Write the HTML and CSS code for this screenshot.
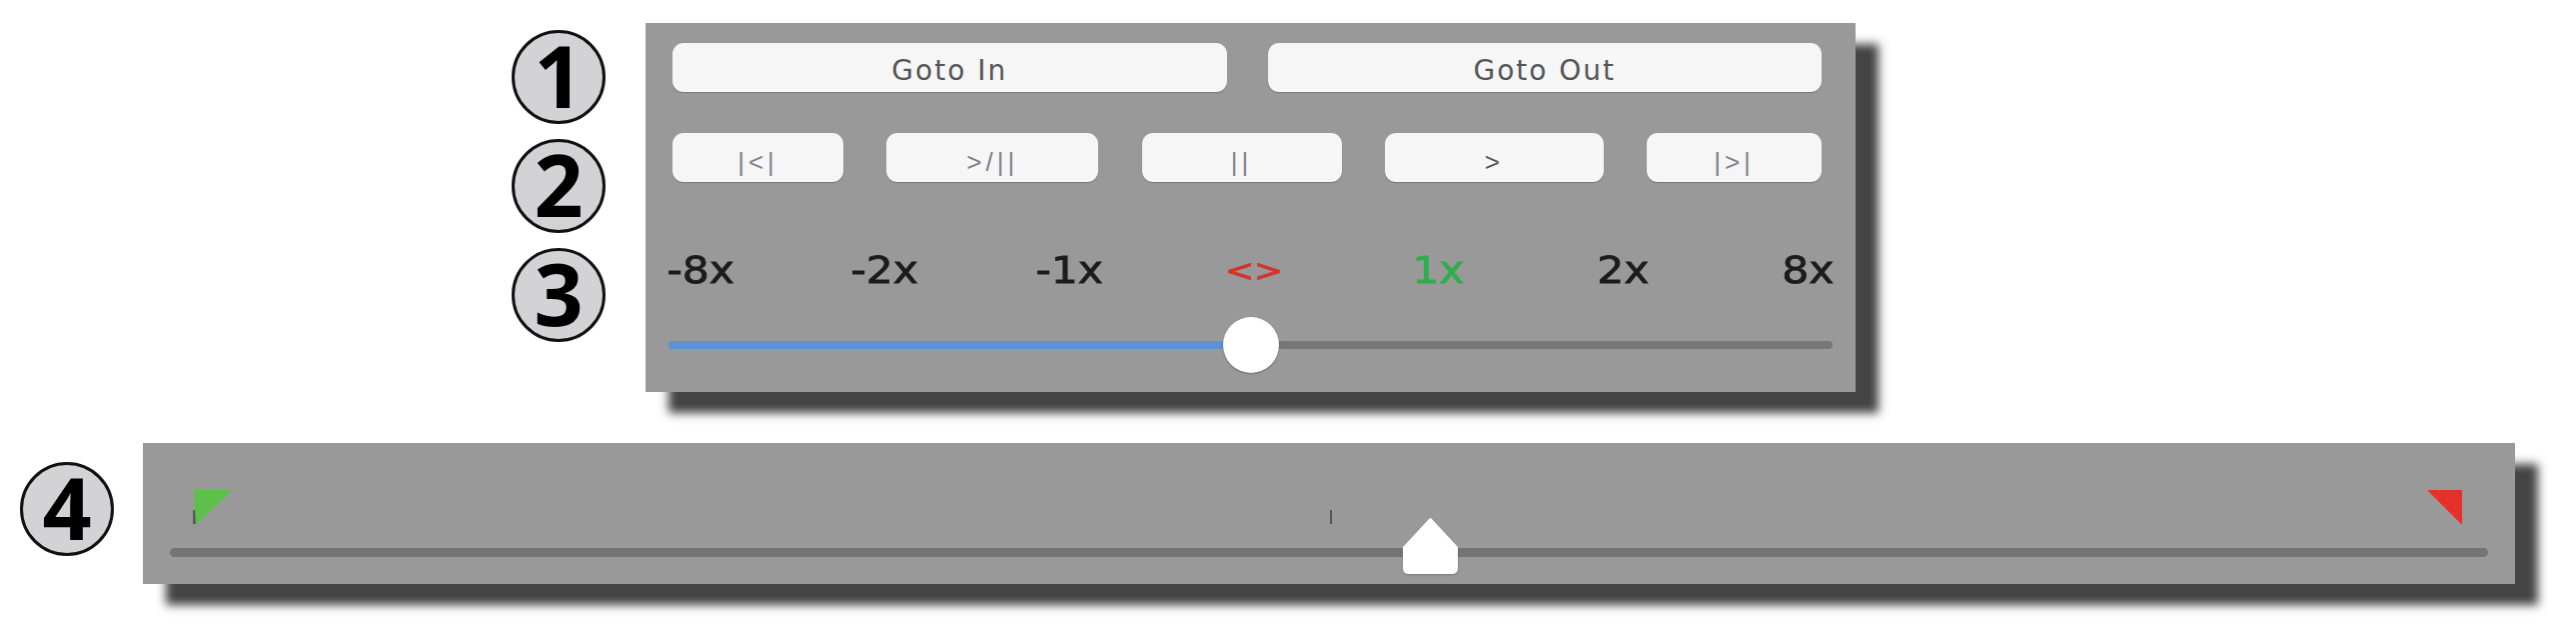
FILE: index.html
```html
<!DOCTYPE html>
<html>
<head>
<meta charset="utf-8">
<link rel="stylesheet" href="styles.css">
</head>
<body>
<div class="page">
  <section class="top">
    <div class="badges">
      <div class="badge">1</div>
      <div class="badge">2</div>
      <div class="badge">3</div>
    </div>
    <div class="panel transport">
      <div class="row goto">
        <div class="btn btn-lg">Goto In</div>
        <div class="btn btn-lg">Goto Out</div>
      </div>
      <div class="row controls">
        <div class="btn btn-sm w-start">|&lt;|</div>
        <div class="btn btn-sm w-playpause">&gt;/||</div>
        <div class="btn btn-sm w-pause">||</div>
        <div class="btn btn-sm w-play">&gt;</div>
        <div class="btn btn-sm w-end">|&gt;|</div>
      </div>
      <div class="speeds">
        <span class="speed"><span class="glyphs">-8x</span></span>
        <span class="speed"><span class="glyphs">-2x</span></span>
        <span class="speed"><span class="glyphs">-1x</span></span>
        <span class="speed stop"><span class="glyphs">&lt;&gt;</span></span>
        <span class="speed normal"><span class="glyphs">1x</span></span>
        <span class="speed"><span class="glyphs">2x</span></span>
        <span class="speed"><span class="glyphs">8x</span></span>
      </div>
      <div class="slider">
        <div class="slider-track">
          <div class="slider-fill" style="width:50%"></div>
        </div>
        <div class="slider-knob" style="left:50%"></div>
      </div>
    </div>
  </section>

  <section class="bottom">
    <div class="badge badge-4">4</div>
    <div class="panel timeline-panel">
      <div class="timeline">
        <div class="timeline-track"></div>
        <div class="stub in-stub"></div>
        <svg class="marker in-marker" viewBox="0 0 39 35" width="39" height="35"><path d="M0 0 L39 0 L2 35 Z" fill="#5cc04a"/></svg>
        <svg class="marker out-marker" viewBox="0 0 35 35" width="35" height="35"><path d="M0 0 L35 0 L35 35 Z" fill="#e8302a"/></svg>
        <div class="tick"></div>
        <svg class="playhead" viewBox="0 0 55 56" width="55" height="56"><path d="M26 1 Q27.5 -1 29 1 L55 29 L55 50 Q55 56 49 56 L6 56 Q0 56 0 50 L0 29 Z" fill="#ffffff"/></svg>
      </div>
    </div>
  </section>
</div>
</body>
</html>
```

FILE: styles.css
```css
* { box-sizing: border-box; }

html, body {
  margin: 0;
  padding: 0;
  background: #ffffff;
  width: 2578px;
  height: 630px;
  overflow: hidden;
}

.page {
  display: flex;
  flex-direction: column;
}

/* numbered badges */
.badge {
  width: 94px;
  height: 94px;
  border-radius: 50%;
  border: 3px solid #111111;
  background: #d3d3d5;
  display: flex;
  align-items: center;
  justify-content: center;
  font-family: "Open Sans", "DejaVu Sans", sans-serif;
  font-weight: 700;
  font-size: 86px;
  line-height: 1;
  color: #000000;
  padding-bottom: 4px;
}

.top {
  display: flex;
  align-items: flex-start;
  padding-top: 23px;
  margin-left: 512px;
}

.badges {
  display: flex;
  flex-direction: column;
  gap: 15px;
  padding-top: 7px;
}

.panel {
  background: #999999;
  box-shadow: 23px 21px 9px rgba(52, 52, 52, 0.92);
}

.transport {
  margin-left: 40px;
  width: 1211px;
  height: 369px;
  padding: 20px 24px 19px 22px;
  display: flex;
  flex-direction: column;
}

.row {
  display: flex;
  height: 49px;
  margin: 0 10px 0 5px;
}

.goto {
  gap: 41px;
}

.controls {
  margin-top: 41px;
  justify-content: space-between;
}

.btn {
  height: 49px;
  background: #f6f6f6;
  border-radius: 11px;
  box-shadow: 0 1px 1px rgba(60, 60, 60, 0.35);
  display: flex;
  align-items: center;
  justify-content: center;
}

.btn-lg {
  flex: 1;
  font-family: "DejaVu Sans", sans-serif;
  font-size: 28px;
  letter-spacing: 2px;
  color: #555558;
  padding-top: 6px;
}

.btn-sm {
  font-family: "Liberation Sans", Arial, sans-serif;
  font-size: 26px;
  letter-spacing: 4px;
  color: #7e808c;
  padding-top: 10px;
}

.w-start { width: 171px; }
.w-playpause { width: 212px; }
.w-pause { width: 200px; }
.w-play { width: 219px; color: #55565c; }
.w-end { width: 175px; }

/* speed labels */
.speeds {
  margin: 70px -16px 0 -7px;
  height: 37px;
  display: grid;
  grid-template-columns: repeat(7, 80px);
  justify-content: space-between;
}

.speed {
  font-family: "DejaVu Sans", sans-serif;
  font-size: 38px;
  line-height: 37px;
  color: #1c1c1c;
  text-align: center;
  -webkit-text-stroke: 0.8px currentColor;
}

.glyphs {
  display: inline-block;
  transform: scaleX(1.12);
}

.stop { color: #d2352d; font-size: 31px; }
.normal { color: #2fae4c; }

/* slider */
.slider {
  position: relative;
  margin: 28px -1px 0 1px;
  height: 56px;
  display: flex;
  align-items: center;
}

.slider-track {
  flex: 1;
  height: 8px;
  border-radius: 4px;
  background: #777777;
  overflow: hidden;
}

.slider-fill {
  height: 100%;
  background: #5a92d5;
}

.slider-knob {
  position: absolute;
  top: 0;
  width: 56px;
  height: 56px;
  margin-left: -28px;
  border-radius: 50%;
  background: #ffffff;
  box-shadow: 0 1px 2px rgba(0, 0, 0, 0.3);
}

/* bottom timeline */
.bottom {
  display: flex;
  align-items: flex-start;
  margin-top: 51px;
  padding-left: 20px;
}

.badge-4 {
  margin-top: 19px;
}

.timeline-panel {
  margin-left: 29px;
  width: 2374px;
  height: 141px;
  padding: 45px 27px 8px 27px;
}

.timeline {
  position: relative;
  height: 88px;
  padding-top: 60px;
}

.timeline-track {
  height: 9px;
  border-radius: 5px;
  background: #747474;
}

.marker {
  position: absolute;
  top: 2px;
  display: block;
}

.in-marker { left: 24px; }
.out-marker { left: 2259px; }

.stub {
  position: absolute;
  width: 3px;
  height: 14px;
  background: #5b5b5b;
}

.in-stub {
  left: 23px;
  top: 22px;
}

.tick {
  position: absolute;
  left: 1161px;
  top: 22px;
  width: 2px;
  height: 14px;
  background: #555555;
}

.playhead {
  position: absolute;
  left: 1234px;
  top: 30px;
  display: block;
  filter: drop-shadow(0 1px 1px rgba(0, 0, 0, 0.2));
}
```
